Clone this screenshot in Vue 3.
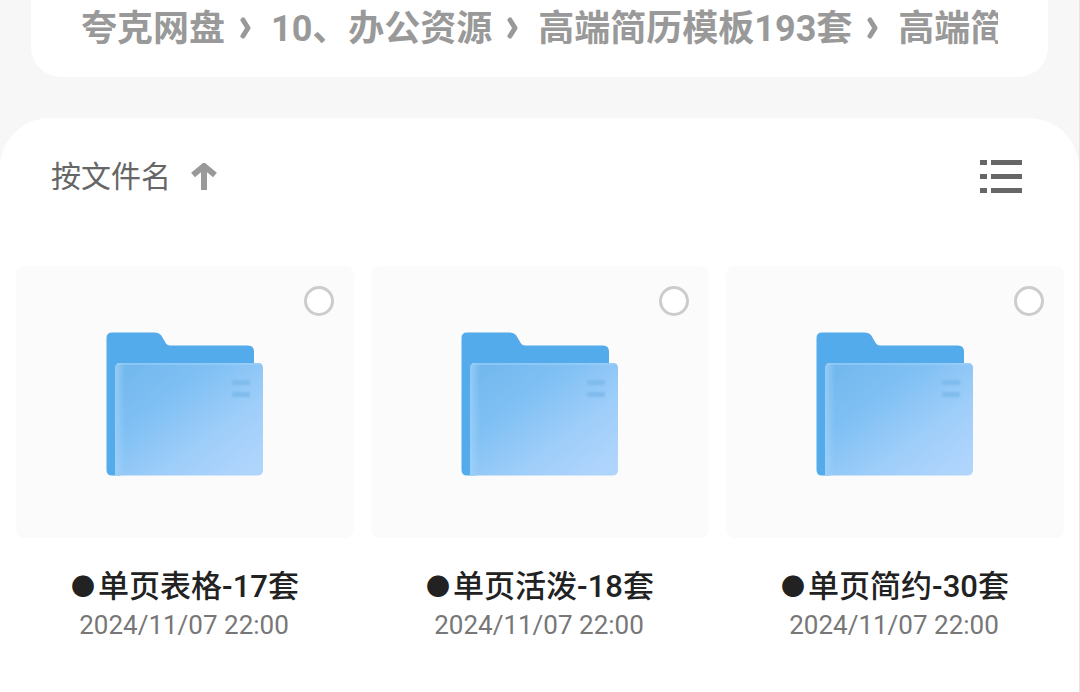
<script setup>
import { ref } from 'vue'

const crumbs = ['夸克网盘', '10、办公资源', '高端简历模板193套', '高端简']
const folders = ref([
  { id: 1, name: '单页表格-17套', date: '2024/11/07 22:00', checked: false },
  { id: 2, name: '单页活泼-18套', date: '2024/11/07 22:00', checked: false },
  { id: 3, name: '单页简约-30套', date: '2024/11/07 22:00', checked: false },
])
</script>

<template>
  <div class="page">
    <nav class="crumb-card" aria-label="路径">
      <ol class="crumbs">
        <li v-for="(c, i) in crumbs" :key="i" class="crumb">
          <svg v-if="i > 0" class="sep" viewBox="0 0 46 24" aria-hidden="true">
            <path d="M18 3 L23 11 L18 19" />
          </svg>
          <a href="#">{{ c }}</a>
        </li>
      </ol>
    </nav>

    <main class="panel">
      <header class="toolbar">
        <button type="button" class="sort">
          <span>按文件名</span>
          <svg class="arrow" viewBox="0 0 26 28" aria-hidden="true">
            <path d="M13 27 V4 M2 12 L13 3 L24 12" />
          </svg>
        </button>
        <button type="button" class="view" aria-label="列表视图">
          <svg class="list" viewBox="0 0 42 34" aria-hidden="true">
            <path d="M0 0h7v5h-7z M11 0h31v5h-31z M0 14h7v5h-7z M11 14h31v5h-31z M0 28h7v5h-7z M11 28h31v5h-31z" />
          </svg>
        </button>
      </header>

      <ul class="grid">
        <li v-for="f in folders" :key="f.id" class="item">
          <div class="tile">
            <input v-model="f.checked" class="tick" type="checkbox" :aria-labelledby="`name-${f.id}`" />
            <svg class="folder" viewBox="0 0 157 144" aria-hidden="true">
              <defs>
                <linearGradient :id="`front-${f.id}`" x1="0.08" y1="0.1" x2="0.92" y2="0.95">
                  <stop offset="0" stop-color="#74b9ee" />
                  <stop offset="0.3" stop-color="#80c0f4" />
                  <stop offset="0.65" stop-color="#9dcdf9" />
                  <stop offset="1" stop-color="#b0d5fd" />
                </linearGradient>
                <linearGradient :id="`edge-${f.id}`" x1="0" y1="0" x2="1" y2="0">
                  <stop offset="0" stop-color="#a4d4f8" stop-opacity="0.7" />
                  <stop offset="1" stop-color="#a4d4f8" stop-opacity="0" />
                </linearGradient>
                <filter :id="`soft-${f.id}`" x="-20%" y="-50%" width="140%" height="200%">
                  <feGaussianBlur stdDeviation="1.2" />
                </filter>
              </defs>
              <path
                d="M6 0.500H49Q53 0.500 55 3L60 11.500Q61.500 13.500 64 13.500H142Q148 13.500 148 19.500V60H14V143.500H6Q0.500 143.500 0.500 138V6Q0.500 0.500 6 0.500Z"
                fill="#54abeb"
              />
              <path
                d="M14 31H152Q157 31 157 36V138Q157 143.500 151 143.500H9V36Q9 31 14 31Z"
                :fill="`url(#front-${f.id})`"
              />
              <path d="M14 31H19V143.500H9V36Q9 31 14 31Z" :fill="`url(#edge-${f.id})`" />
              <path d="M11 32H153" stroke="#a4d4f8" stroke-opacity="0.5" stroke-width="2" />
              <g :filter="`url(#soft-${f.id})`" fill="#7fbced">
                <rect x="126" y="48" width="18" height="5" rx="1" />
                <rect x="126" y="60" width="18" height="5" rx="1" />
              </g>
            </svg>
          </div>
          <h2 :id="`name-${f.id}`" class="name"><span class="dot">●</span><span>{{ f.name }}</span></h2>
          <time class="date">{{ f.date }}</time>
        </li>
      </ul>
    </main>
  </div>
</template>

<style>
body {
  margin: 0;
  background: #f7f7f7;
}
</style>

<style scoped>
.page {
  display: flex;
  flex-direction: column;
  min-height: 100vh;
  box-sizing: border-box;
  border-right: 1px solid #e4e4e4;
  background: #f7f7f7;
  font-family: Roboto, "Noto Sans CJK SC", sans-serif;
}

.crumb-card {
  margin: 0 31px;
  padding: 5px 50px 24px;
  border-radius: 0 0 30px 30px;
  background: #fff;
}

.crumbs {
  display: flex;
  margin: 0;
  padding: 0;
  overflow: hidden;
  list-style: none;
}

.crumb {
  display: flex;
  flex: none;
  align-items: center;
  font-size: 36px;
  font-weight: 700;
  line-height: 48px;
}

.crumb a {
  color: #999;
  text-decoration: none;
}

.sep {
  width: 46px;
  height: 24px;
  fill: none;
  stroke: #999;
  stroke-width: 5;
  stroke-linecap: round;
  stroke-linejoin: round;
}

.panel {
  flex: 1;
  margin-top: 41px;
  border-radius: 50px 50px 0 0;
  background: #fff;
}

.toolbar {
  display: flex;
  align-items: center;
  justify-content: space-between;
  padding: 36px 57px 66px 51px;
}

button {
  display: flex;
  align-items: center;
  padding: 0;
  border: 0;
  background: none;
  font-family: inherit;
  cursor: pointer;
}

.sort {
  gap: 20px;
  color: #666;
  font-size: 30px;
  line-height: 46px;
}

.arrow {
  width: 26px;
  height: 28px;
  fill: none;
  stroke: #999;
  stroke-width: 6;
}

.list {
  width: 42px;
  height: 34px;
  fill: #666;
}

.grid {
  display: grid;
  grid-template-columns: repeat(3, 1fr);
  gap: 17px;
  margin: 0;
  padding: 0 15px 0 16px;
  list-style: none;
}

.item {
  display: flex;
  flex-direction: column;
  text-align: center;
}

.tile {
  position: relative;
  display: flex;
  justify-content: center;
  padding: 66px 2px 62px 0;
  border-radius: 8px;
  background: #fbfbfb;
}

.tick {
  position: absolute;
  top: 20px;
  right: 20px;
  width: 30px;
  height: 30px;
  margin: 0;
  border: 3px solid #ccc;
  border-radius: 50%;
  appearance: none;
  background: #fff;
}

.tick:checked {
  background: #54abeb;
}

.folder {
  width: 157px;
  height: 144px;
}

.name {
  display: flex;
  align-items: center;
  justify-content: center;
  gap: 3px;
  margin: 29px 0 0;
  color: #222;
  font-size: 31px;
  font-weight: 500;
  line-height: 40px;
  white-space: nowrap;
}

.dot {
  font-size: 24px;
}

.date {
  padding-right: 2px;
  color: #777;
  font-size: 26px;
  line-height: 36px;
}
</style>
